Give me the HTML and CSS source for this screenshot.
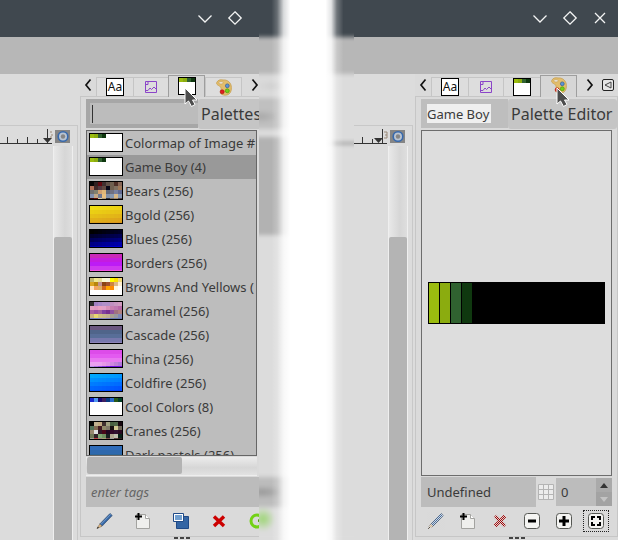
FILE: index.html
```html
<!DOCTYPE html>
<html lang="en">
<head>
<meta charset="utf-8">
<title>Palettes and Palette Editor</title>
<link rel="stylesheet" href="styles.css">
</head>
<body>
<svg class="defs" aria-hidden="true">
  <defs>
    <pattern id="dither" width="2" height="2" patternUnits="userSpaceOnUse"><path d="M0 0h1v1H0zM1 1h1v1H1z" fill="#d9d9d9" shape-rendering="crispEdges"/></pattern>
    <symbol id="chev-down" viewBox="0 0 20 20"><path d="M3.500 6.500 10 13l6.500-6.500" fill="none" stroke="#f4f5f5" stroke-width="1.300"/></symbol>
    <symbol id="diamond" viewBox="0 0 20 20"><path d="M10 2.800 16.200 9 10 15.200 3.800 9z" fill="none" stroke="#f4f5f5" stroke-width="1.300"/></symbol>
    <symbol id="cross" viewBox="0 0 20 20"><path d="M5 4l10 10M15 4 5 14" fill="none" stroke="#f4f5f5" stroke-width="1.300"/></symbol>
    <symbol id="arrow-l" viewBox="0 0 8 14"><path d="M6.500 1.500 2 7l4.500 5.500" fill="none" stroke="#111" stroke-width="1.700"/></symbol>
    <symbol id="arrow-r" viewBox="0 0 8 14"><path d="M1.500 1.500 6 7l-4.500 5.500" fill="none" stroke="#111" stroke-width="1.700"/></symbol>
    <symbol id="image-tab" viewBox="0 0 12 12"><path d="M.5 .5h11v11H.5z" fill="none" stroke="#8b45c8"/><path d="M1 9.500h2l2-2.500 1.500 1.500L9 6l2 2M1 3.500h2V1" fill="none" stroke="#8b45c8"/></symbol>
    <symbol id="gb-tab" viewBox="0 0 18 18"><path d="M0 0h18v18H0z" fill="#000"/><path d="M1 5h16v12H1z" fill="#fff"/><path d="M1 1h4v4H1z" fill="#9bbc0f"/><path d="M5 1h4v4H5z" fill="#8bac0f"/><path d="M9 1h4v4H9z" fill="#306230"/><path d="M13 1h4v4h-4z" fill="#0f380f"/></symbol>
    <symbol id="paint" viewBox="0 0 16 17"><path d="M1 3C2 .8 5 .5 7 1c4-.5 7 2 8 5 .8 3 .6 7-2 9-2 1.500-5 1.500-7 .5-2-1-2-2.500-1-4.500.5-2-.5-3-1.500-4C1.500 6-.3 5 1 3z" fill="#e2bd6c" stroke="#c79f50" stroke-width=".8"/><ellipse cx="5" cy="3.800" rx="2.200" ry="1.300" fill="#e6e2d8" stroke="#c79f50" stroke-width=".6"/><circle cx="11.300" cy="6.800" r="1.900" fill="#5c94d6" stroke="#315c94" stroke-width=".7"/><circle cx="11.300" cy="11.800" r="2" fill="#73d216" stroke="#4d9c08" stroke-width=".7"/><circle cx="6.200" cy="12.800" r="2" fill="#e02020" stroke="#a80c0c" stroke-width=".6"/></symbol>
    <symbol id="pointer" viewBox="0 0 14 21"><path d="M1 1v16l3.500-3 3 5.500 3.500-2-2.500-4.500H13z" fill="#4d4d4d" stroke="#fff" stroke-width="1"/></symbol>
    <symbol id="pencil" viewBox="0 0 18 18"><path d="M3.800 12 14 1.500l2.200 2L6 14.200z" fill="#3465a4" stroke="#3d5878" stroke-width=".8"/><path d="M5 12.300 14.800 2.300" stroke="#6e9bd0" stroke-width="1"/><path d="M3.800 12 6 14.200 1 16.500z" fill="#e8bd83" stroke="#7b6a55" stroke-width=".6"/><path d="m.8 16.800 1-2 1.200 1z" fill="#222"/></symbol>
    <symbol id="new-page" viewBox="0 0 18 18"><path d="M2.500 2.500h9l4 4v10h-13z" fill="#efefed" stroke="#a3a3a0"/><path d="M11.500 2.500v4h4" fill="#fff" stroke="#a3a3a0"/><path d="M1 4.500h7M4.500 1v7" stroke="#000" stroke-width="2"/></symbol>
    <symbol id="copy" viewBox="0 0 18 18"><path d="M4.500 4.500h12v12h-12z" fill="#3465a4" stroke="#204a87"/><path d="M1.500 1.500h10v8h-10z" fill="#fff" stroke="#204a87"/><path d="M3 3h7v5H3z" fill="#729fcf"/></symbol>
    <symbol id="delete" viewBox="0 0 18 18"><path d="m4 4.500 10 9.500M14 4.500 4 14" stroke="#cc0000" stroke-width="3.400"/></symbol>
    <symbol id="refresh" viewBox="0 0 18 18"><circle cx="9" cy="9" r="6" fill="none" stroke="#73d216" stroke-width="3"/><path d="M10 7v3l3-1" fill="#4e9a06"/></symbol>
    <symbol id="frame" viewBox="0 0 18 18"><rect x="1.500" y="1.500" width="15" height="15" rx="3" fill="#f4f4f2" stroke="#555753"/></symbol>
  </defs>
</svg>

<main class="scene">
  <section class="window" aria-label="Palettes window">
    <header class="titlebar clipped">
      <button aria-label="Minimize"><svg><use href="#chev-down"/></svg></button>
      <button aria-label="Maximize"><svg><use href="#diamond"/></svg></button>
    </header>
    <div class="strip"></div>
    <div class="body">
      <div class="workspace">
        <div class="canvas-frame">
          <div class="canvas">
            <svg class="ruler" viewBox="0 0 53 17"><path d="M0 15.500h52M7.500 9v6M17.500 11v4M27.500 9v6M37.500 11v4M47.500 1v14" stroke="#333" fill="none"/><path d="M43 10h9l-4.500 5z" fill="#333"/><path d="M50 4h2M51 7h2M50 9h2" stroke="#987" /></svg>
          </div>
          <div class="side">
            <svg class="nav" viewBox="0 0 15 13"><path d="M0 0h15v13H0z" fill="#858585"/><circle cx="8" cy="6.500" r="4.800" fill="#b9c4d2" stroke="#3769ad" stroke-width="1.600"/><circle cx="8" cy="6.500" r="2.200" fill="#858585"/></svg>
            <div class="vscroll"><div class="thumb"></div></div>
          </div>
        </div>
      </div>
      <div class="dock-clip cut">
        <div class="dock">
          <nav class="tabs">
            <button class="scroll" aria-label="Previous tabs"><svg><use href="#arrow-l"/></svg></button>
            <button class="tab"><span class="aa">Aa</span></button>
            <button class="tab narrow" aria-label="Images"><svg class="i12"><use href="#image-tab"/></svg></button>
            <button class="tab active" aria-label="Palettes"><svg class="i18"><use href="#gb-tab"/></svg><svg class="pointer"><use href="#pointer"/></svg></button>
            <button class="tab" aria-label="Palette Editor"><svg class="i16"><use href="#paint"/></svg></button>
            <button class="scroll next" aria-label="Next tabs"><svg><use href="#arrow-r"/></svg></button>
          </nav>
          <div class="panel">
            <div class="namebar"><input class="search" aria-label="Palette name"><div class="tip" role="tooltip">Palettes</div></div>
            <div class="listrow">
              <ul class="list">
                <li><span class="swatch" data-palette="gameboy"></span>Colormap of Image #</li>
                <li class="selected"><span class="swatch" data-palette="gameboy"></span>Game Boy (4)</li>
                <li><span class="swatch" data-palette="bears"></span>Bears (256)</li>
                <li><span class="swatch" data-palette="bgold"></span>Bgold (256)</li>
                <li><span class="swatch" data-palette="blues"></span>Blues (256)</li>
                <li><span class="swatch" data-palette="borders"></span>Borders (256)</li>
                <li><span class="swatch" data-palette="browns"></span>Browns And Yellows (</li>
                <li><span class="swatch" data-palette="caramel"></span>Caramel (256)</li>
                <li><span class="swatch" data-palette="cascade"></span>Cascade (256)</li>
                <li><span class="swatch" data-palette="china"></span>China (256)</li>
                <li><span class="swatch" data-palette="coldfire"></span>Coldfire (256)</li>
                <li><span class="swatch" data-palette="cool"></span>Cool Colors (8)</li>
                <li><span class="swatch" data-palette="cranes"></span>Cranes (256)</li>
                <li><span class="swatch" data-palette="pastels"></span>Dark pastels (256)</li>
              </ul>
            </div>
            <div class="hscroll"><div class="thumb"></div></div>
            <input class="tags" placeholder="enter tags" aria-label="Tags">
            <div class="actions five">
              <button aria-label="Edit"><svg><use href="#pencil"/></svg></button>
              <button aria-label="New"><svg><use href="#new-page"/></svg></button>
              <button aria-label="Duplicate"><svg><use href="#copy"/></svg></button>
              <button aria-label="Delete"><svg><use href="#delete"/></svg></button>
              <button aria-label="Refresh"><svg><use href="#refresh"/></svg></button>
            </div>
          </div>
          <div class="grip"><i></i><i></i><i></i></div>
        </div>
      </div>
    </div>
  </section>

  <div class="seam" aria-hidden="true">
    <div class="smear">
      <div class="s-title"></div><div class="s-strip"></div><div class="s-tabs"></div><div class="s-name"></div>
      <div class="s-gap"></div><div class="s-thumb"></div><div class="s-fill"></div><div class="s-tags"></div><div class="s-actions"></div>
    </div>
    <div class="smear">
      <div class="s-title"></div><div class="s-strip"></div><div class="s-page"></div><div class="s-ruler"></div><div class="s-fill"></div>
    </div>
  </div>

  <section class="window" aria-label="Palette editor window">
    <header class="titlebar">
      <button aria-label="Minimize"><svg><use href="#chev-down"/></svg></button>
      <button aria-label="Maximize"><svg><use href="#diamond"/></svg></button>
      <button aria-label="Close"><svg><use href="#cross"/></svg></button>
    </header>
    <div class="strip"></div>
    <div class="body">
      <div class="workspace">
        <div class="canvas-frame">
          <div class="canvas">
            <svg class="ruler" viewBox="0 0 53 17"><path d="M0 15.500h52M7.500 9v6M17.500 11v4M27.500 9v6M37.500 11v4M47.500 1v14" stroke="#333" fill="none"/><path d="M39 10h9l-4.500 5z" fill="#333"/><path d="M49 4h3v3h-2M52 7v3h-3" stroke="#987" fill="none"/></svg>
          </div>
          <div class="side">
            <svg class="nav" viewBox="0 0 15 13"><path d="M0 0h15v13H0z" fill="#858585"/><circle cx="8" cy="6.500" r="4.800" fill="#b9c4d2" stroke="#3769ad" stroke-width="1.600"/><circle cx="8" cy="6.500" r="2.200" fill="#858585"/></svg>
            <div class="vscroll"><div class="thumb"></div></div>
          </div>
        </div>
      </div>
      <div class="dock-clip">
        <div class="dock">
          <nav class="tabs">
            <button class="scroll" aria-label="Previous tabs"><svg><use href="#arrow-l"/></svg></button>
            <button class="tab"><span class="aa">Aa</span></button>
            <button class="tab narrow" aria-label="Images"><svg class="i12"><use href="#image-tab"/></svg></button>
            <button class="tab" aria-label="Palettes"><svg class="i18"><use href="#gb-tab"/></svg></button>
            <button class="tab active" aria-label="Palette Editor"><svg class="i16"><use href="#paint"/></svg><svg class="pointer"><use href="#pointer"/></svg></button>
            <button class="scroll next" aria-label="Next tabs"><svg><use href="#arrow-r"/></svg></button>
            <button class="menu" aria-label="Configure this tab"><svg viewBox="0 0 12 12"><rect x=".5" y=".5" width="11" height="11" rx="1.500" fill="#e6e6e6" stroke="#222"/><path d="M9 3v6L3 6z" fill="none" stroke="#444"/></svg></button>
          </nav>
          <div class="panel">
            <div class="namebar"><div class="namebox"><input class="name" value="Game Boy" aria-label="Palette name"></div><div class="tip" role="tooltip">Palette Editor</div></div>
            <div class="editor">
              <div class="colors"><i class="c1"></i><i class="c2"></i><i class="c3"></i><i class="c4"></i></div>
            </div>
            <div class="fields">
              <input class="entry" value="Undefined" aria-label="Color name">
              <svg class="gridicon" viewBox="0 0 16 16"><path d="M.5 .5h15v15H.5zM5.500 0v16M10.500 0v16M0 5.500h16M0 10.500h16" fill="#ececec" stroke="#b4b4b4"/></svg>
              <div class="spin">
                <input value="0" aria-label="Columns">
                <div class="steps"><button aria-label="Increase"><svg viewBox="0 0 8 5"><path d="M0 5 4 0l4 5z" fill="#333"/></svg></button><button aria-label="Decrease"><svg viewBox="0 0 8 5"><path d="M0 0h8L4 5z" fill="#c4c4c4"/></svg></button></div>
              </div>
            </div>
            <div class="actions six">
              <button disabled aria-label="Edit color"><svg viewBox="0 0 18 18"><use href="#pencil"/><path d="M0 0h18v18H0z" fill="url(#dither)"/></svg></button>
              <button aria-label="New color"><svg><use href="#new-page"/></svg></button>
              <button disabled aria-label="Delete color"><svg viewBox="0 0 18 18"><path d="m4 4 10 10M14 4 4 14" stroke="#a40000" stroke-width="3.400"/><path d="M0 0h18v18H0z" fill="url(#dither)"/></svg></button>
              <button aria-label="Zoom out"><svg viewBox="0 0 18 18"><use href="#frame"/><path d="M5 9h8" stroke="#000" stroke-width="3"/></svg></button>
              <button aria-label="Zoom in"><svg viewBox="0 0 18 18"><use href="#frame"/><path d="M4 9h10M9 4v10" stroke="#000" stroke-width="3"/></svg></button>
              <button class="focused" aria-label="Zoom all"><svg viewBox="0 0 18 18"><use href="#frame"/><path d="M5 8V5h3M10 5h3v3M13 10v3h-3M8 13H5v-3" fill="none" stroke="#000" stroke-width="2"/></svg></button>
            </div>
          </div>
          <div class="grip"><i></i><i></i><i></i></div>
        </div>
      </div>
    </div>
  </section>
</main>
<script src="swatches.js"></script>
</body>
</html>
```
FILE: styles.css
```css
* { box-sizing: border-box; }
body { margin: 0; background: #fff; color: #3a3a3a; font: 13px/24px "Noto Sans", "Open Sans", sans-serif; }
button, input { margin: 0; padding: 0; border: 0; background: none; color: inherit; font: inherit; min-width: 0; }
button { display: flex; align-items: center; justify-content: center; }
svg { display: block; flex: none; }
.defs { position: absolute; width: 0; height: 0; }

.scene { display: grid; grid-template-columns: 259fr 95fr 264fr; height: 100vh; overflow: hidden; }
.window { display: flex; flex-direction: column; min-width: 0; min-height: 0; background: #dcdcdc; }
.titlebar { display: flex; flex: none; align-items: center; justify-content: flex-end; gap: 10px; height: 37px; padding-right: 8px; background: #40484f; }
.titlebar.clipped { padding-right: 14px; }
.titlebar svg { width: 20px; height: 20px; }
.strip { flex: none; height: 37px; background: #b7b7b7; }
.body { display: flex; flex: 1; min-height: 0; }

/* image window */
.workspace { display: flex; flex: 1; min-width: 0; padding: 51px 2px 0 0; }
.canvas-frame { display: flex; flex: 1; min-width: 0; border: solid #c8c8c8; border-width: 1px 1px 0 0; }
.canvas { display: flex; flex: 1; justify-content: flex-end; min-width: 0; overflow: hidden; padding-top: 2px; }
.ruler { width: 53px; height: 17px; }
.side { display: flex; flex: none; flex-direction: column; width: 24px; padding-top: 4px; }
.nav { width: 15px; height: 13px; margin-left: 2px; }
.vscroll { flex: 1; width: 20px; margin-top: 3px; padding-top: 91px; border: solid #efefef; border-width: 0 1px; background: linear-gradient(90deg, #e8e8e8, #d6d6d6 60%, #dedede); }
.vscroll .thumb { height: 100%; border-radius: 2px 2px 0 0; background: #b4b4b4; }

/* dock */
.dock-clip { display: flex; flex: none; width: 203px; min-height: 0; overflow: hidden; background: #dadada; }
.dock-clip.cut { width: 179px; }
.dock { display: flex; flex: none; flex-direction: column; width: 203px; }
.tabs { display: flex; flex: none; height: 22px; padding-left: 4px; }
.scroll { width: 12px; justify-content: flex-start; }
.scroll svg { width: 8px; height: 14px; }
.scroll.next { margin-left: 9px; width: 16px; }
.tab { width: 37px; margin-top: 3px; border: solid #c5c5c5; border-width: 1px 0 0 1px; background: #dddddd; }
.tab.narrow { width: 35px; }
.tab:nth-last-child(2):not(.next), .tab:nth-last-child(3) { border-right-width: 1px; }
.tab.active { position: relative; z-index: 2; margin: 1px 0 -1px; padding-top: 2px; border: solid #9e9e9e; border-width: 1px 1px 0; background: #d6d6d6; }
.aa { width: 18px; height: 18px; border: 1px solid #000; background: #fff; color: #111; font-size: 12px; line-height: 15px; }
.i12 { width: 12px; height: 12px; }
.i16 { width: 16px; height: 17px; }
.i18 { width: 18px; height: 18px; }
.active .i18, .active .i16 { margin-top: -4px; }
.pointer { position: absolute; top: 11px; left: 15px; width: 14px; height: 21px; }
.menu svg { width: 12px; height: 12px; }
.panel { display: flex; flex: 1; flex-direction: column; min-height: 0; padding: 2px 5px 1px; border: 1px solid #c6c6c6; }
.namebar { display: flex; flex: none; height: 30px; margin: 0 -5px 1px 0; padding-bottom: 1px; }
.search { flex: 1; border: 4px solid #a7a7a7; border-right: 0; background: linear-gradient(#333, #333) 2px 2px / 1px 18px no-repeat #bcbcbc; outline: 0; }
.namebox { flex: 1; min-width: 0; padding: 5px 6px; background: #bebebe; }
.name { display: block; width: 64px; height: 19px; background: #efefef; }
.tip { flex: none; width: 109px; height: 30px; padding-left: 3px; border-radius: 3px; background: #c5c5c5; font-size: 16px; line-height: 31px; white-space: nowrap; }
.cut .tip { width: 84px; }
.listrow { display: flex; flex: 1; min-height: 0; padding-right: 20px; }
.list { flex: 1; min-width: 0; margin: 0; padding: 0; overflow: hidden; border: 1px solid #666; background: #bdbdbd; list-style: none; }
.list li { display: flex; gap: 2px; height: 24px; padding-left: 2px; white-space: nowrap; }
.selected { background: #999; }
.swatch { display: grid; flex: none; grid-template-columns: repeat(8, 4px); grid-auto-rows: 4px; width: 34px; height: 19px; margin-top: 2px; overflow: hidden; border: 1px solid #000; background: #fff; }
.hscroll { flex: none; height: 19px; margin: 1px 20px 1px 0; padding: 0 0 1px 1px; background: linear-gradient(#ececec, #d6d6d6 60%, #e2e2e2); border-bottom: 1px solid #eee; }
.hscroll .thumb { width: 95px; height: 17px; border-radius: 2px; background: #b3b3b3; }
.tags { flex: none; height: 30px; padding-left: 5px; background: #bcbcbc; font-style: italic; }
.tags::placeholder { color: #666; opacity: 1; }
.actions { display: grid; flex: none; height: 28px; }
.five { grid-template-columns: repeat(5, 38px); }
.six { grid-template-columns: repeat(6, 32px); margin: 0 -1px; }
.actions svg { width: 18px; height: 18px; }
.focused { margin: 4px; outline: 1px dotted #222; }
.grip { display: flex; flex: none; justify-content: center; gap: 2px; height: 3px; }
.grip i { width: 4px; height: 2px; background: #444; }

/* palette editor */
.editor { display: flex; flex: 1; align-items: center; min-height: 0; margin-bottom: 1px; padding: 0 6px; border: 1px solid #6d6d6d; background: #dddddd; }
.colors { display: flex; flex: 1; gap: 1px; height: 42px; padding: 1px; background: #000; }
.colors i { width: 10px; }
.c1 { background: #9bbc0f; }
.c2 { background: #8bac0f; }
.c3 { background: #306230; }
.c4 { background: #0f380f; }
.fields { display: flex; flex: none; align-items: center; gap: 2px; height: 30px; }
.entry { flex: 1; height: 30px; padding-left: 6px; background: #bcbcbc; }
.gridicon { width: 16px; height: 16px; }
.spin { display: flex; flex: none; width: 56px; height: 28px; background: #bcbcbc; }
.spin input { flex: 1; padding-left: 5px; }
.steps { display: grid; width: 16px; background: #aaa; }
.steps button + button { background: #a3a3a3; }
.steps svg { width: 8px; height: 5px; }

/* blurred join between the windows */
.seam { position: relative; display: grid; grid-template-columns: 1fr 1fr; min-height: 0; overflow: hidden; background: #dcdcdc; }
.seam::after { content: ""; position: absolute; inset: 0; background: linear-gradient(90deg, rgba(255,255,255,0) 13%, rgba(255,255,255,.2) 19%, rgba(255,255,255,.8) 26%, #fff 33%, #fff 70%, rgba(255,255,255,.85) 76%, rgba(255,255,255,.25) 82%, rgba(255,255,255,0) 89%); }
.smear { display: flex; flex-direction: column; min-height: 0; margin: 0 -8px; filter: blur(2px); background: #dcdcdc; }
.smear > div { flex: none; }
.smear .s-title { height: 45px; margin-top: -8px; background: #40484f; }
.s-strip { height: 37px; background: #b7b7b7; }
.s-tabs { height: 24px; background: radial-gradient(ellipse at 35% 50%, #cdcdcd, #dadada 30%); }
.s-name { height: 31px; background: radial-gradient(ellipse at 15% 60%, #a6a6a6, #c0c0c0 25%); }
.s-gap { height: 8px; }
.s-thumb { height: 98px; background: #b2b2b2; }
.smear .s-fill { flex: 1; }
.s-tags { height: 30px; background: radial-gradient(ellipse at 18% 50%, #969696, #bcbcbc 30%); }
.s-actions { height: 33px; background: radial-gradient(circle at 12px 12px, #9ad570, #dcdcdc 12px); }
.s-page { height: 69px; border-bottom: 1px solid #c4c4c4; }
.s-ruler { height: 1px; background: #555; }
```
FILE: swatches.js
```js
// Cell colours of each palette preview, eight to a row.
const repeatRow = (...rows) => rows.flatMap(c => Array(8).fill(c));
// Blends from a to b along the cells, row by row.
const ramp = (a, b) => Array.from({ length: 40 }, (_, i) => {
  const t = i / 39;
  return `rgb(${a.map((v, k) => Math.round(v + (b[k] - v) * t)).join(",")})`;
});
const hex = s => s.split(" ").map(c => "#" + c);

const palettes = {
  gameboy: hex("9bbc0f 8bac0f 306230 0f380f"),
  bears: hex("0a0808 302020 600810 403030 605048 706050 503028 886858 b07058 402828 503840 604840 080818 706050 807060 a07858 707070 808070 d0a070 e0b878 606878 707080 7880a0 606890 8090b0 c0a888 707890 e8c080 8090a8 8898b0 d8b888 8898b0 300808 601010 d8c8a0 b0a080 303030 807060 a08870 504040"),
  bgold: ramp([240, 222, 18], [216, 148, 28]),
  blues: ramp([0, 0, 0], [0, 0, 215]),
  borders: [...repeatRow("#c92ab8", "#c51cdf", "#bd1cf5", "#cf39ef", "#f055df")],
  browns: hex("c0b870 f0e890 e8e098 fafad2 f8f8e0 ffff00 ffe000 f0d878 daa520 b8860b c09090 8b4513 a0522d cd853f deb887 fff0d0 ffe4c4 f4a460 deb060 d2691e ffa500 ff8c00 fff8e0 ffffff"),
  caramel: hex("303030 a080c0 a888c8 b090c8 b090c8 c090c0 c898c0 d09cc0 e0a0c0 e098c0 e8a0c0 e0a0c8 d890b8 c880b0 c078b0 b868a8 a860a0 9850a0 a060a0 8040a0 783090 9050a0 a07080 b08080 c8b080 e8d870 d0c080 c8b888 c0b090 a8a090 9898a0 8088b8 7080c0 7080c0 8080c0 8888c0 8080c0 6878b0 6878b0 6878b0"),
  cascade: [...repeatRow("#6b5680", "#50658a", "#586e98", "#7778ac", "#8d83b8")],
  china: [...repeatRow("#dd4ce9", "#e35af0", "#e878f0"), ...hex("eca0f0 eca0f0 eca0f0 e898e8 e090e8 d088e0 c080d8 b078d8 b890e8 a870e0 9850e0 8838e0 7820e0 7010e0 7010e0 7010e0")],
  coldfire: ramp([0, 168, 255], [0, 64, 255]),
  cool: hex("1828d0 5098f0 180870 402060 083880 2868c8 285818 004028"),
  cranes: hex("080808 c0b090 c0a880 403030 a0a080 486040 506848 180810 507058 806850 401820 908868 807868 181010 d0c890 706858 988870 e0e0e0 301828 480818 200820 300828 301030 280820 707858 302028 80a870 709060 182020 b0a890 c0c0b0 082018 a0a090 c04040 a08080 a0a070 805050 a0a0a0 604040 302020"),
  pastels: [...repeatRow("#2e6cba", "#2d68ad", "#2b6699", "#306890", "#386f88")]
};

document.querySelectorAll(".swatch").forEach(el => {
  palettes[el.dataset.palette].forEach(color => {
    const cell = document.createElement("i");
    cell.style.background = color;
    el.append(cell);
  });
});
```
